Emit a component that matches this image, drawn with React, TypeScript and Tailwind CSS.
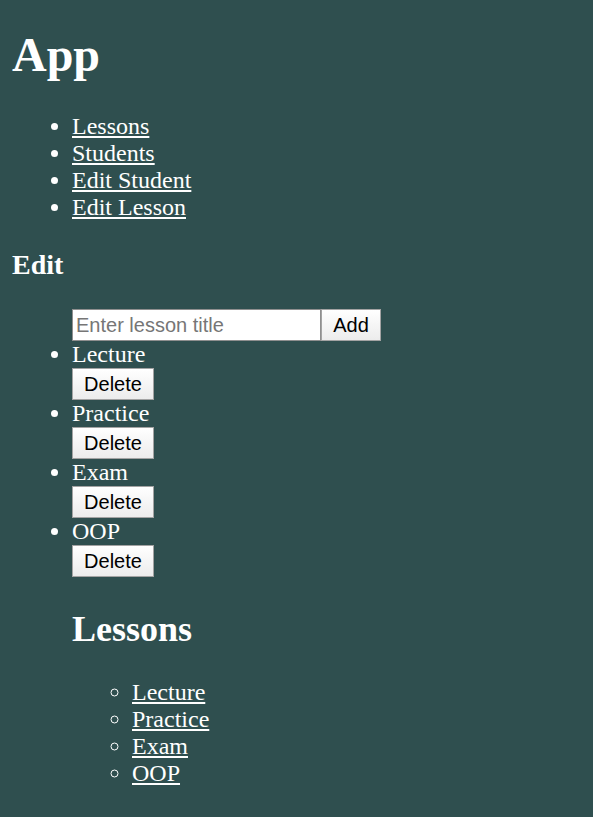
import React from "react";

const lessons = ["Lecture", "Practice", "Exam", "OOP"];
const navLinks = ["Lessons", "Students", "Edit Student", "Edit Lesson"];

const btn =
  "border border-[#a3a3a3] bg-linear-to-b from-white to-[#ececec] font-['Liberation_Sans',Arial,sans-serif] text-[20px] leading-none text-black";

const App = () => {
  const [title, setTitle] = React.useState("");

  return (
    <div className="min-h-[817px] overflow-hidden bg-[#2f4f4f] px-[12px] font-['Liberation_Serif','Times_New_Roman',serif] text-white">
      <h1 className="mt-[27px] mb-[31px] text-[48px] leading-[55px] font-bold">
        App
      </h1>

      <ul className="list-disc pl-[60px] text-[24px] leading-[27px]">
        {navLinks.map((link) => (
          <li key={link}>
            <a href="#" className="text-white underline">
              {link}
            </a>
          </li>
        ))}
      </ul>

      <h3 className="mt-[28px] mb-[27px] text-[28px] leading-[32px] font-bold">
        Edit
      </h3>

      <ul className="list-disc pl-[60px] text-[24px] leading-[27px]">
        <div className="flex pt-px">
          <input
            className="h-[32px] w-[249px] border border-[#8f8f8f] bg-white px-[3px] font-['Liberation_Sans',Arial,sans-serif] text-[20px] text-black outline-none placeholder:text-[#767676]"
            placeholder="Enter lesson title"
            value={title}
            onChange={(e) => setTitle(e.target.value)}
          />
          <button type="button" className={`h-[32px] w-[60px] ${btn}`}>
            Add
          </button>
        </div>

        {lessons.map((lesson) => (
          <li key={lesson}>
            <div>{lesson}</div>
            <button type="button" className={`block h-[32px] w-[82px] ${btn}`}>
              Delete
            </button>
          </li>
        ))}

        <div>
          <h2 className="mt-[32px] mb-[29px] text-[36px] leading-[41px] font-bold">
            Lessons
          </h2>
          <ul className="list-[circle] pl-[60px]">
            {lessons.map((lesson) => (
              <li key={lesson}>
                <a href="#" className="text-white underline">
                  {lesson}
                </a>
              </li>
            ))}
          </ul>
        </div>
      </ul>
    </div>
  );
};

export default App;
